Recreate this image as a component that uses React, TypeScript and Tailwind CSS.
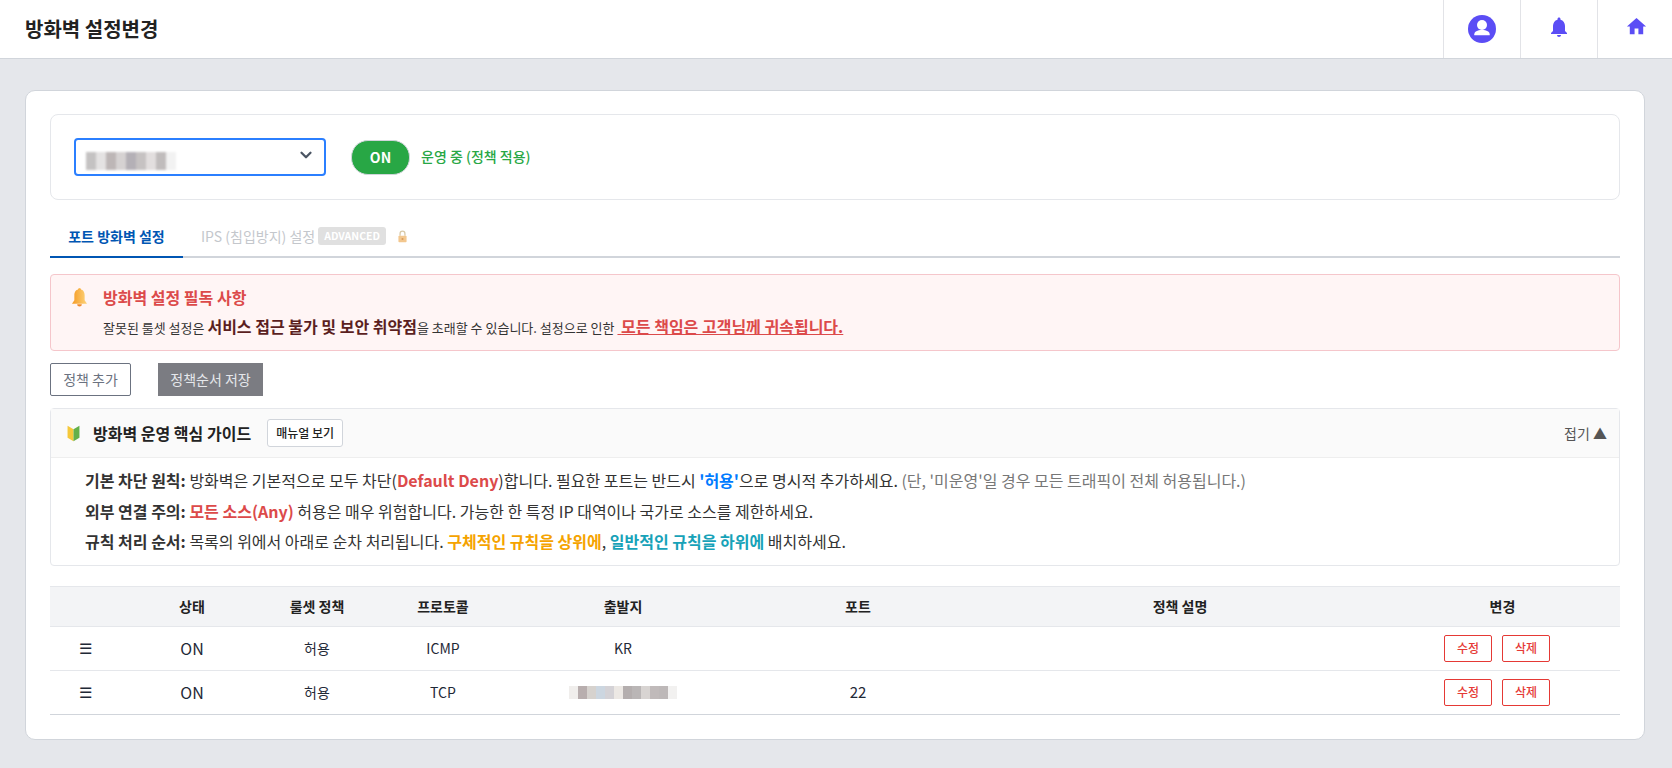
import React from "react";
import { MdNotifications, MdHome } from "react-icons/md";
import { LuChevronDown } from "react-icons/lu";

const FONT = "font-['Noto_Sans_CJK_KR','Noto_Sans',sans-serif]";
const GRID = "grid grid-cols-[70px_144px_106px_146px_214px_256px_388px_246px] items-center text-center";

function Pixels({ cells, w, h, blur }: { cells: string[]; w: number; h: number; blur: string }) {
  return (
    <div className={`flex ${blur}`}>
      {cells.map((c, i) => (
        <div key={i} style={{ width: w, height: h, background: c }} />
      ))}
    </div>
  );
}

function TopIcon({ width, children }: { width: string; children: React.ReactNode }) {
  return <div className={`flex h-full items-center justify-center border-l border-[#e2e3e7] ${width}`}>{children}</div>;
}

function Bell({ className }: { className: string }) {
  return (
    <svg viewBox="0 0 24 24" className={className}>
      <defs>
        <linearGradient id="bellg" x1="0" x2="1" y1="0" y2="0">
          <stop offset="0" stopColor="#f59a23" />
          <stop offset="1" stopColor="#fdd47c" />
        </linearGradient>
      </defs>
      <circle cx="12" cy="2" r="1.800" fill="#f7a825" />
      <path d="M12 1.500c-4.500 0-6.500 3.500-6.500 7.500v6.500L2.500 20h19l-3-4.500V9c0-4-2-7.500-6.500-7.500z" fill="url(#bellg)" />
      <path d="M9 20.500a3 3 0 0 0 6 0z" fill="#ef8a2a" />
    </svg>
  );
}

function Rule({ pixels, left, port }: { pixels?: boolean; left?: string; port?: string }) {
  return (
    <div className={`${GRID} h-[44px] border-b border-[#e5e7eb] pb-[1px] text-[15px] text-[#1f2937] last:border-[#d1d5db]`}>
      <div className="text-[15px] font-light">☰</div>
      <div className="text-[16px]">ON</div>
      <div className="text-[14px]">허용</div>
      <div className="text-[14px]">{left}</div>
      <div className="flex justify-center text-[14px]">
        {pixels ? (
          <Pixels
            w={9}
            h={13}
            blur="blur-[0.6px]"
            cells={["#f0eeec","#b8aeae","#d6d2ce","#ccd6e0","#d4d2d6","#ece8e4","#b4aeae","#bab6b6","#d8d4d2","#c0baba","#bdb8b8","#f2f1f0"]}
          />
        ) : (
          "KR"
        )}
      </div>
      <div>{port}</div>
      <div />
      <div className="flex justify-center gap-[10px]">
        <button className="h-[27px] w-[48px] rounded-[2px] border border-[#e53935] bg-white text-[12px] font-medium text-[#e53935]">수정</button>
        <button className="h-[27px] w-[48px] rounded-[2px] border border-[#e53935] bg-white text-[12px] font-medium text-[#e53935]">삭제</button>
      </div>
    </div>
  );
}

export default function App() {
  return (
    <div className={`${FONT} min-h-[768px] bg-[#e5e7eb] text-[#1f2937]`}>
      <header className="flex h-[59px] items-center justify-between border-b border-[#d1d5db] bg-white pl-[25px]">
        <h1 className="text-[20px] font-bold text-[#222]">방화벽 설정변경</h1>
        <div className="flex h-full">
          <TopIcon width="w-[77px]">
            <svg viewBox="0 0 28 28" className="h-[28px] w-[28px]">
              <circle cx="14" cy="14" r="14" fill="#5b4df5" />
              <circle cx="14" cy="10" r="5" fill="#fff" />
              <path d="M6.300 20.300v-1c0-2.500 3-4.300 7.700-4.300s7.700 1.800 7.700 4.300v1z" fill="#fff" />
            </svg>
          </TopIcon>
          <TopIcon width="w-[77px]"><MdNotifications className="mb-[4px] text-[24px] text-[#5b4df5]" /></TopIcon>
          <TopIcon width="w-[75px]"><MdHome className="mb-[5px] ml-[3px] text-[23px] text-[#5b4df5]" /></TopIcon>
        </div>
      </header>

      <main className="pl-[25px] pr-[27px] pt-[31px]">
        <section className="h-[650px] rounded-[10px] border border-[#d1d5db] bg-white px-[24px] pt-[23px]">
          <div className="flex h-[86px] items-center rounded-[8px] border border-[#e5e7eb] pl-[23px]">
            <div className="flex h-[38px] w-[252px] items-center justify-between rounded-[4px] border-2 border-[#2b7fff] pl-[10px] pr-[9px]">
              <div className="mt-[8px]">
                <Pixels
                  w={10}
                  h={18}
                  blur="blur-[1px]"
                  cells={["#c4c2c2","#e4e2e2","#bdb6b6","#d6d2d2","#b4b0b6","#c6c2c2","#e2dede","#c0bcbc","#f2f2f2"]}
                />
              </div>
              <LuChevronDown className="mb-[4px] text-[18px] text-[#4b5563]" strokeWidth={3} />
            </div>
            <div className="ml-[25px] flex h-[35px] w-[59px] items-center justify-center rounded-[17px] border border-[#d1d5db] bg-[#28a745] text-[14px] font-bold text-white">ON</div>
            <span className="mb-[2px] ml-[11px] text-[14px] font-medium text-[#28a745]">운영 중 (정책 적용)</span>
          </div>

          <nav className="mt-[16px] flex h-[42px] items-stretch border-b-2 border-[#d1d5db]">
            <div className="-mb-[2px] flex w-[133px] items-center justify-center border-b-2 border-[#0056b3] text-[14px] font-bold text-[#0056b3]">포트 방화벽 설정</div>
            <div className="ml-[18px] flex items-center text-[14px] text-[#c4c7cc]">
              IPS (침입방지) 설정
              <span className="ml-[3px] rounded-[3px] bg-[#e0e0e0] px-[6px] text-[10.500px] font-bold leading-[18px] text-white">ADVANCED</span>
              <svg viewBox="0 0 12 16" className="ml-[11px] h-[13px] w-[11px]">
                <path d="M3 7V4.500a3 3 0 0 1 6 0V7" fill="none" stroke="#d8c9a8" strokeWidth="1.600" />
                <rect x="1" y="7" width="10" height="8" rx="1" fill="#f3c78e" />
                <circle cx="6" cy="11" r="1.300" fill="#d99a5a" />
              </svg>
            </div>
          </nav>

          <div className="mt-[16px] flex h-[77px] rounded-[4px] border border-[#f5c6cb] bg-[#fff5f5] pl-[19px] pt-[11px]">
            <Bell className="mt-[2px] h-[19px] w-[19px] shrink-0" />
            <div className="ml-[14px]">
              <div className="text-[16px] font-bold leading-[22px] text-[#dc4a4a]">방화벽 설정 필독 사항</div>
              <div className="mt-[6px] text-[13px] leading-[24px] text-[#333]">
                잘못된 룰셋 설정은 <b className="text-[16px] text-[#5b1f1f]">서비스 접근 불가 및 보안 취약점</b>을 초래할 수 있습니다. 설정으로 인한{" "}
                <b className="text-[16px] text-[#dc4a4a] underline">{"\u00a0"}모든 책임은 고객님께 귀속됩니다.</b>
              </div>
            </div>
          </div>

          <div className="mt-[12px] flex gap-[27px]">
            <button className="h-[33px] w-[81px] rounded-[2px] border border-[#6b7280] bg-white text-[14px] text-[#6b7280]">정책 추가</button>
            <button className="h-[33px] w-[105px] bg-[#7b7c82] text-[14px] text-[#e5e7eb]">정책순서 저장</button>
          </div>

          <div className="mt-[12px] h-[158px] rounded-[4px] border border-[#e5e7eb]">
            <div className="flex h-[49px] items-center justify-between border-b border-[#eeeeee] bg-[#fafafa] pl-[15px] pr-[12px]">
              <div className="flex items-center">
                <svg viewBox="0 0 16 20" className="h-[17px] w-[15px]">
                  <path d="M1 1l7 4v14l-7-4z" fill="#f5c83a" />
                  <path d="M15 1L8 5v14l7-4z" fill="#63b04a" />
                </svg>
                <strong className="ml-[12px] text-[16px] font-bold text-[#222]">방화벽 운영 핵심 가이드</strong>
                <button className="ml-[16px] h-[28px] w-[76px] rounded-[3px] border border-[#d1d5db] bg-white text-[12px] font-medium text-[#222]">매뉴얼 보기</button>
              </div>
              <div className="text-[14px] text-[#555]">접기 ▲</div>
            </div>
            <div className="pl-[34px] pt-[7px] text-[16px] leading-[30.500px] text-[#333]">
              <div>
                <b>기본 차단 원칙:</b> 방화벽은 기본적으로 모두 차단(<b className="text-[#dc4a4a]">Default Deny</b>)합니다. 필요한 포트는 반드시 <b className="text-[#007bff]">'허용'</b>으로 명시적 추가하세요. <span className="text-[#777]">(단, '미운영'일 경우 모든 트래픽이 전체 허용됩니다.)</span>
              </div>
              <div>
                <b>외부 연결 주의:</b> <b className="text-[#dc4a4a]">모든 소스(Any)</b> 허용은 매우 위험합니다. 가능한 한 특정 IP 대역이나 국가로 소스를 제한하세요.
              </div>
              <div>
                <b>규칙 처리 순서:</b> 목록의 위에서 아래로 순차 처리됩니다. <b className="text-[#f5a300]">구체적인 규칙을 상위에</b>, <b className="text-[#17a2b8]">일반적인 규칙을 하위에</b> 배치하세요.
              </div>
            </div>
          </div>

          <div className="mt-[20px] border-t border-[#e5e7eb]">
            <div className={`${GRID} h-[40px] border-b border-[#e5e7eb] bg-[#f3f4f6] text-[14px] font-bold text-[#222]`}>
              <div />
              <div>상태</div>
              <div>룰셋 정책</div>
              <div>프로토콜</div>
              <div>출발지</div>
              <div>포트</div>
              <div>정책 설명</div>
              <div className="pl-[11px]">변경</div>
            </div>
            <Rule left="ICMP" />
            <Rule left="TCP" pixels port="22" />
          </div>
        </section>
      </main>
    </div>
  );
}
